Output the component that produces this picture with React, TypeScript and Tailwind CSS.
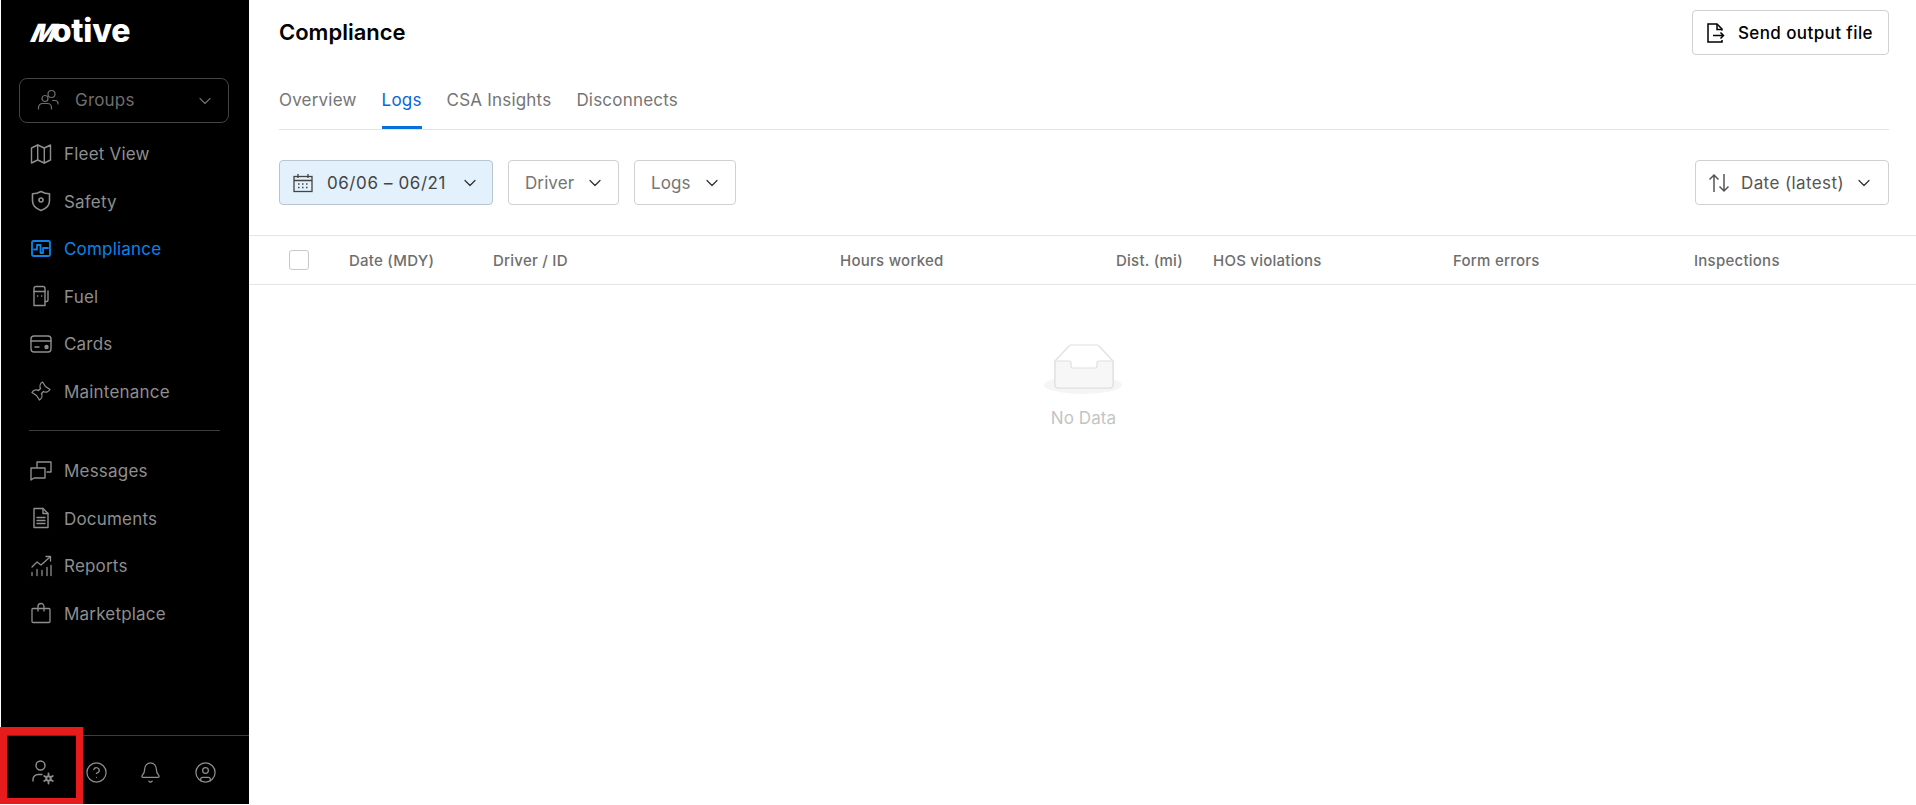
import React from "react";
import { ChevronDown, CircleHelp, Bell, CircleUser } from "lucide-react";

function Icon({ children, w = 1.4 }: { children: React.ReactNode; w?: number }) {
  return (
    <svg width="22" height="22" viewBox="0 0 22 22" fill="none" stroke="currentColor" strokeWidth={w} strokeLinejoin="round" strokeLinecap="round">
      {children}
    </svg>
  );
}

const GroupsIcon = () => (
  <Icon w={1.2}>
    <circle cx="8" cy="9.500" r="3" />
    <path d="M1.500 20v-1.500a4 4 0 0 1 4-4h5a4 4 0 0 1 4 4V20" />
    <circle cx="14.500" cy="5" r="3.500" />
    <path d="M15.500 11.500h2.500a3 3 0 0 1 3 3V15" />
  </Icon>
);

const MapIcon = () => (
  <Icon>
    <path d="M1.500 5 7.700 2l6.600 3 6.200-3v15l-6.200 3-6.600-3-6.200 3z" />
    <path d="M7.700 2v15M14.300 5v15" />
  </Icon>
);

const ShieldIcon = () => (
  <Icon w={1.6}>
    <path d="M11 1.500c3 1.800 6 2.300 8.500 2.300v7c0 4.500-3.500 8-8.500 9.700-5-1.700-8.500-5.200-8.500-9.700v-7c2.500 0 5.500-.5 8.500-2.300z" />
    <circle cx="11" cy="10" r="2" />
  </Icon>
);

const ComplianceIcon = () => (
  <Icon w={1.8}>
    <rect x="2" y="3" width="18" height="15" rx="1.500" />
    <path d="M4 11.500h3V7h3.500v8H13v-5h5" />
  </Icon>
);

const FuelIcon = () => (
  <Icon>
    <path d="M4 20.500V3.500a2 2 0 0 1 2-2h7a2 2 0 0 1 2 2v17z" />
    <path d="M4 6.500h11" />
    <path d="M15 16.500h1.500a1.500 1.500 0 0 0 1.500-1.500V6" />
    <path d="M7.500 11h.3M11.500 11h.3" />
  </Icon>
);

const CardIcon = () => (
  <Icon>
    <rect x="1" y="3" width="20" height="16" rx="3" />
    <path d="M1 8h20M5 14h4" />
    <circle cx="16.500" cy="14" r="1.500" fill="currentColor" />
  </Icon>
);

const WrenchIcon = () => (
  <Icon w={1.3}>
    <path d="M12.500 2A5 5 0 0 0 10.500 8.500L8.500 10.500A5 5 0 0 0 2 12.500L6.500 15.500 9.500 20A5 5 0 0 0 11.500 13.500L13.500 11.500A5 5 0 0 0 20 9.500L15.500 6.500z" />
  </Icon>
);

const MessagesIcon = () => (
  <Icon>
    <path d="M7 7V2h14v10h-4" />
    <path d="M1 8h14v10H4l-3 2z" />
  </Icon>
);

const DocumentIcon = () => (
  <Icon>
    <path d="M4 1.500h9l5 5v14H4z" />
    <path d="M13 1.500v5h5" />
    <path d="M7 10.500h8M7 13.500h8M7 16.500h8" />
  </Icon>
);

const ReportsIcon = () => (
  <Icon w={1.3}>
    <path d="M2 20.500v-3M7 20.500v-6M12 20.500v-5M17 20.500v-8M21 20.500v-10" />
    <path d="M2 12l5-5 4 3 9-8" />
    <path d="M16 1.500h4.500v4.500" />
  </Icon>
);

const BagIcon = () => (
  <Icon w={1.3}>
    <path d="M3 6.500h16a1 1 0 0 1 1 1v12a1 1 0 0 1-1 1H3a1 1 0 0 1-1-1v-12a1 1 0 0 1 1-1z" />
    <path d="M8 9V4.500a3 3 0 0 1 6 0V9" />
  </Icon>
);

const UserGearIcon = () => (
  <svg width="26" height="26" viewBox="0 0 26 26" fill="none" stroke="currentColor" strokeWidth="1.4" strokeLinecap="round">
    <circle cx="10.500" cy="6.500" r="4.500" />
    <path d="M3 22v-1.500a5 5 0 0 1 5-5h4" />
    <circle cx="18.500" cy="19.500" r="2.200" strokeWidth="2" />
    <path d="M18.500 14.500v1.500M18.500 23v1.500M14.200 17l1.300.8M21.500 21.200l1.300.8M14.200 22l1.300-.8M21.500 17.800l1.300-.8" strokeWidth="1.800" />
  </svg>
);

const SendFileIcon = () => (
  <svg width="22" height="22" viewBox="0 0 22 22" fill="none" stroke="currentColor" strokeWidth="1.5">
    <path d="M17 8.500V7l-5-5H3v18h14v-2" />
    <path d="M12 2v5.500h5" />
    <path d="M8 13.500h10.500M15.500 10.500l3 3-3 3" />
  </svg>
);

const CalendarIcon = () => (
  <svg width="20" height="20" viewBox="0 0 20 20" fill="none" stroke="currentColor" strokeWidth="1.300">
    <rect x="1" y="3.500" width="18" height="15" />
    <path d="M1 7.500h18M5 1v4M15 1v4" />
    <path d="M5 11h1.500M9 11h1.500M13 11h1.500M5 14.500h1.500M9 14.500h1.500M13 14.500h1.500" strokeWidth="1.500" />
  </svg>
);

const SortIcon = () => (
  <svg width="24" height="22" viewBox="0 0 24 22" fill="none" stroke="currentColor" strokeWidth="1.500">
    <path d="M7 20V3M2.500 7.500 7 3l4.500 4.500" />
    <path d="M17 2v17M12.500 14.500 17 19l4.500-4.500" />
  </svg>
);

function NavItem({ icon, label, active }: { icon: React.ReactNode; label: string; active?: boolean }) {
  return (
    <div className={`flex h-[47.5px] items-center pl-[29px] text-[17px] tracking-[0.2px] ${active ? "text-[#0a84e8]" : "text-[#8e8e8e]"}`}>
      <span className="flex w-[22px] justify-center">{icon}</span>
      <span className="ml-3 pt-[2px]">{label}</span>
    </div>
  );
}

function Filter({ label, widthClass }: { label: string; widthClass: string }) {
  return (
    <div className={`flex h-[45px] items-center justify-between rounded border border-[#d0d0d0] pr-[13px] pl-4 text-[17px] tracking-[0.1px] text-[#757575] ${widthClass}`}>
      <span className="pt-[2px]">{label}</span>
      <ChevronDown size={20} strokeWidth={1.5} className="text-[#333]" />
    </div>
  );
}

const columns = [
  { label: "Date (MDY)", cls: "w-[144px]" },
  { label: "Driver / ID", cls: "w-[347px]" },
  { label: "Hours worked", cls: "w-[276px]" },
  { label: "Dist. (mi)", cls: "w-[97px]" },
  { label: "HOS violations", cls: "w-[240px]" },
  { label: "Form errors", cls: "w-[241px]" },
  { label: "Inspections", cls: "" },
];

export default function App() {
  return (
    <div className="relative flex h-screen overflow-hidden bg-white pb-px pl-px font-['Inter',sans-serif]">
      {/* Sidebar */}
      <aside className="flex h-full w-[248px] shrink-0 flex-col bg-black">
        <div className="flex h-[52px] items-baseline pt-[15px] pl-[26px] text-[32px] leading-none font-extrabold tracking-[-0.2px] text-white">
          <span className="mr-[1px] inline-block origin-bottom -skew-x-[24deg] text-[25px] font-black">M</span>
          <span>otive</span>
        </div>
        <div className="mt-[26px] mr-[20px] ml-[18px] flex h-[45px] items-center rounded-lg border border-[#444] pr-[13px] pl-[17px] text-[17px] tracking-[0.2px] text-[#6e6e6e]">
          <span className="-mt-px flex"><GroupsIcon /></span>
          <span className="ml-[16px] flex-1">Groups</span>
          <ChevronDown size={20} strokeWidth={1.3} />
        </div>
        <nav className="mt-[7px]">
          <NavItem icon={<MapIcon />} label="Fleet View" />
          <NavItem icon={<ShieldIcon />} label="Safety" />
          <NavItem icon={<ComplianceIcon />} label="Compliance" active />
          <NavItem icon={<FuelIcon />} label="Fuel" />
          <NavItem icon={<CardIcon />} label="Cards" />
          <NavItem icon={<WrenchIcon />} label="Maintenance" />
          <div className="mt-[15px] mr-[29px] mb-[16px] ml-[28px] h-px bg-[#3d3d3d]" />
          <NavItem icon={<MessagesIcon />} label="Messages" />
          <NavItem icon={<DocumentIcon />} label="Documents" />
          <NavItem icon={<ReportsIcon />} label="Reports" />
          <NavItem icon={<BagIcon />} label="Marketplace" />
        </nav>
        <div className="mt-auto flex h-[69px] items-center border-t border-[#3d3d3d] pt-[4px] text-[#8e8e8e]">
          <span className="ml-[29px] flex"><UserGearIcon /></span>
          <span className="ml-[29px] flex"><CircleHelp size={23} strokeWidth={1.3} /></span>
          <span className="ml-[31px] flex"><Bell size={23} strokeWidth={1.3} /></span>
          <span className="ml-[32px] flex"><CircleUser size={23} strokeWidth={1.3} /></span>
        </div>
      </aside>

      {/* Main */}
      <main className="flex-1 pt-[10px]">
        <div className="pr-[27px] pl-[30px]">
          <div className="flex h-[45px] items-center justify-between">
            <h1 className="text-[22px] font-semibold text-black">Compliance</h1>
            <button className="flex h-[45px] items-center rounded border border-[#d0d0d0] pr-[15px] pl-[12px] text-[17px] font-medium tracking-[0.4px] text-black">
              <SendFileIcon />
              <span className="ml-[11px] pt-[2px]">Send output file</span>
            </button>
          </div>
          <div className="mt-[20px] flex h-[55px] gap-[25px] border-b border-[#e2e2e2] text-[17px] tracking-[0.2px] text-[#757575]">
            <span className="pt-[13px]">Overview</span>
            <span className="border-b-[3px] border-[#0a6fdc] pt-[13px] text-[#0a66d8]">Logs</span>
            <span className="pt-[13px]">CSA Insights</span>
            <span className="pt-[13px]">Disconnects</span>
          </div>
          <div className="mt-[30px] flex items-center gap-[15px]">
            <div className="flex h-[45px] w-[214px] items-center justify-between rounded border border-[#b9c6d2] bg-[#e3f1fc] pr-[12px] pl-[13px] text-[17px] text-[#444]">
              <CalendarIcon />
              <span className="pt-[2px] tracking-[0.6px]">06/06 – 06/21</span>
              <ChevronDown size={20} strokeWidth={1.5} className="text-[#333]" />
            </div>
            <Filter label="Driver" widthClass="w-[111px]" />
            <Filter label="Logs" widthClass="w-[102px]" />
            <div className="ml-auto flex h-[45px] w-[194px] items-center rounded border border-[#d0d0d0] pr-[14px] pl-[11px] text-[17px] tracking-[0.4px] text-[#555]">
              <SortIcon />
              <span className="ml-[10px] flex-1 pt-[2px]">Date (latest)</span>
              <ChevronDown size={20} strokeWidth={1.5} className="text-[#333]" />
            </div>
          </div>
        </div>

        {/* Table header */}
        <div className="mt-[30px] flex h-[50px] items-center border-y border-[#e6e6e6] pl-[40px] text-[15px] font-medium tracking-[0.25px] text-[#6e6e6e]">
          <span className="mr-[40px] h-5 w-5 shrink-0 rounded-[3px] border border-[#c8c8c8]" />
          {columns.map((c) => (
            <span key={c.label} className={`shrink-0 pt-[2px] ${c.cls}`}>{c.label}</span>
          ))}
        </div>

        {/* Empty state */}
        <div className="mt-[59px] flex flex-col items-center pl-[2px]">
          <svg width="80" height="52" viewBox="0 0 80 52" fill="none">
            <ellipse cx="39" cy="41" rx="39" ry="9" fill="#f5f5f5" />
            <path d="M11 17 L25 2 a3 3 0 0 1 2-1 H53 a3 3 0 0 1 2 1 L69 17 V41 a3 3 0 0 1-3 3 H14 a3 3 0 0 1-3-3 Z" fill="#fff" stroke="#e0e0e0" strokeWidth="1.2" />
            <path d="M11 17 H25 a2 2 0 0 1 2 2 V22 a2 2 0 0 0 2 2 H51 a2 2 0 0 0 2-2 V19 a2 2 0 0 1 2-2 H69 V41 a3 3 0 0 1-3 3 H14 a3 3 0 0 1-3-3 Z" fill="#f7f7f7" stroke="#e0e0e0" strokeWidth="1.2" />
          </svg>
          <span className="mt-[10px] text-[17px] tracking-[0.1px] text-[#c4c4c4]">No Data</span>
        </div>
      </main>

      {/* Annotation box over the first footer icon */}
      <div className="pointer-events-none absolute bottom-px left-0 h-[77px] w-[83px] border-x-[7px] border-t-8 border-b-[6px] border-[#e61c1c]" />
    </div>
  );
}
